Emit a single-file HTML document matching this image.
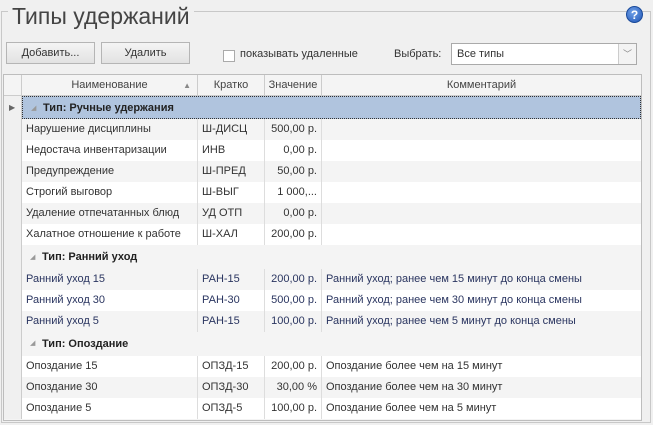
<!DOCTYPE html><html><head><meta charset="utf-8"><style>
*{margin:0;padding:0;box-sizing:border-box}
body{width:653px;height:425px;background:#f0f0f0;font-family:"Liberation Sans","DejaVu Sans",sans-serif;font-size:11px;color:#333;position:relative;overflow:hidden}
.frame{position:absolute;left:1px;top:11px;width:650px;height:412px;border:1px solid #c8c8c8}
.title{position:absolute;left:8px;top:2px;padding:0 4px;background:#f0f0f0;font-size:23px;color:#444;line-height:28px}
.help{position:absolute;left:626px;top:6px;width:17px;height:17px;border-radius:50%;background:radial-gradient(circle at 40% 35%,#6fa0e8,#1f55b5);color:#fff;font-weight:bold;font-size:12px;text-align:center;line-height:17px;border:1px solid #1a4a9a}
.btn{position:absolute;top:42px;height:22px;border:1px solid #b5b5b5;background:linear-gradient(#f4f4f4,#e2e2e2);text-align:center;line-height:20px;color:#333}
.cb{position:absolute;left:223px;top:50px;width:12px;height:12px;border:1px solid #aaa;background:#fff}
.lbl{position:absolute;top:48px}
.sel{position:absolute;left:451px;top:43px;width:186px;height:22px;border:1px solid #aaa;background:#fff;padding-left:5px;line-height:20px}
.sel .ar{position:absolute;right:0;top:0;width:18px;height:20px;border-left:1px solid #ccc;background:#f3f3f3;color:#888;text-align:center;font-size:9px;line-height:20px}
.grid{position:absolute;left:3px;top:74px;width:639px;height:347px;border:1px solid #bdbdbd;background:#f4f4f4;overflow:hidden}
.row{position:absolute;left:0;width:637px;height:21px;line-height:21px}
.c{position:absolute;top:0;height:100%;white-space:nowrap;overflow:hidden;border-right:1px solid #ddd;padding-left:4px}
.rh{left:0;width:18px;background:#f0f0f0;border-right:1px solid #ccc}
.n{left:18px;width:176px}.k{left:194px;width:67px}.v{left:261px;width:57px;text-align:right;padding-right:4px}.m{left:318px;width:319px;border-right:none}
.hdr .c{text-align:center;padding:0;border-right:1px solid #ccc;color:#444}
.w{background:#fff}.g{background:#f4f4f4}
.grp{font-weight:bold;color:#222}
.grp .t{position:absolute;left:18px;top:0;height:100%;width:619px;padding-left:20px}
.tri{position:absolute;left:8px;top:0;color:#999;font-size:7px}
.blue{color:#2a3560}
</style></head><body>
<div class="frame"></div>
<div class="title">Типы удержаний</div>
<div class="help">?</div>
<div class="btn" style="left:6px;width:89px">Добавить...</div>
<div class="btn" style="left:101px;width:89px">Удалить</div>
<div class="cb"></div>
<div class="lbl" style="left:240px">показывать удаленные</div>
<div class="lbl" style="left:394px">Выбрать:</div>
<div class="sel">Все типы<div class="ar">﹀</div></div>
<div class="grid">
<div class="row hdr" style="top:0;background:#f4f4f4;border-bottom:1px solid #ccc"><div class="c rh" style="background:#f4f4f4"></div><div class="c n">Наименование<span style="position:absolute;right:6px;font-size:8px;color:#888">▲</span></div><div class="c k">Кратко</div><div class="c v" style="text-align:center">Значение</div><div class="c m" style="border:none">Комментарий</div></div>
<div class="row grp" style="top:21px;height:23px;line-height:23px"><div class="c rh" style="font-size:8px;color:#666;padding-left:5px">▶</div><div class="t" style="background:#b0c4de;border:1px dotted #333"><span class="tri">◢</span>Тип: Ручные удержания</div></div>
<div class="row g" style="top:44px"><div class="c rh"></div><div class="c n">Нарушение дисциплины</div><div class="c k">Ш-ДИСЦ</div><div class="c v">500,00 р.</div><div class="c m"></div></div>
<div class="row w" style="top:65px"><div class="c rh"></div><div class="c n">Недостача инвентаризации</div><div class="c k">ИНВ</div><div class="c v">0,00 р.</div><div class="c m"></div></div>
<div class="row g" style="top:86px"><div class="c rh"></div><div class="c n">Предупреждение</div><div class="c k">Ш-ПРЕД</div><div class="c v">50,00 р.</div><div class="c m"></div></div>
<div class="row w" style="top:107px"><div class="c rh"></div><div class="c n">Строгий выговор</div><div class="c k">Ш-ВЫГ</div><div class="c v">1 000,...</div><div class="c m"></div></div>
<div class="row g" style="top:128px"><div class="c rh"></div><div class="c n">Удаление отпечатанных блюд</div><div class="c k">УД ОТП</div><div class="c v">0,00 р.</div><div class="c m"></div></div>
<div class="row w" style="top:149px"><div class="c rh"></div><div class="c n">Халатное отношение к работе</div><div class="c k">Ш-ХАЛ</div><div class="c v">200,00 р.</div><div class="c m"></div></div>
<div class="row grp g" style="top:170px;height:24px;line-height:25px"><div class="c rh"></div><div class="t"><span class="tri">◢</span>Тип: Ранний уход</div></div>
<div class="row g blue" style="top:194px"><div class="c rh"></div><div class="c n">Ранний уход 15</div><div class="c k">РАН-15</div><div class="c v">200,00 р.</div><div class="c m">Ранний уход; ранее чем 15 минут до конца смены</div></div>
<div class="row w blue" style="top:215px"><div class="c rh"></div><div class="c n">Ранний уход 30</div><div class="c k">РАН-30</div><div class="c v">500,00 р.</div><div class="c m">Ранний уход; ранее чем 30 минут до конца смены</div></div>
<div class="row g blue" style="top:236px"><div class="c rh"></div><div class="c n">Ранний уход 5</div><div class="c k">РАН-15</div><div class="c v">100,00 р.</div><div class="c m">Ранний уход; ранее чем 5 минут до конца смены</div></div>
<div class="row grp g" style="top:257px;height:24px;line-height:24px"><div class="c rh"></div><div class="t"><span class="tri">◢</span>Тип: Опоздание</div></div>
<div class="row w" style="top:281px"><div class="c rh"></div><div class="c n">Опоздание 15</div><div class="c k">ОПЗД-15</div><div class="c v">200,00 р.</div><div class="c m">Опоздание более чем на 15 минут</div></div>
<div class="row g" style="top:302px"><div class="c rh"></div><div class="c n">Опоздание 30</div><div class="c k">ОПЗД-30</div><div class="c v">30,00 %</div><div class="c m">Опоздание более чем на 30 минут</div></div>
<div class="row w" style="top:323px"><div class="c rh"></div><div class="c n">Опоздание 5</div><div class="c k">ОПЗД-5</div><div class="c v">100,00 р.</div><div class="c m">Опоздание более чем на 5 минут</div></div>
</div>
</body></html>
